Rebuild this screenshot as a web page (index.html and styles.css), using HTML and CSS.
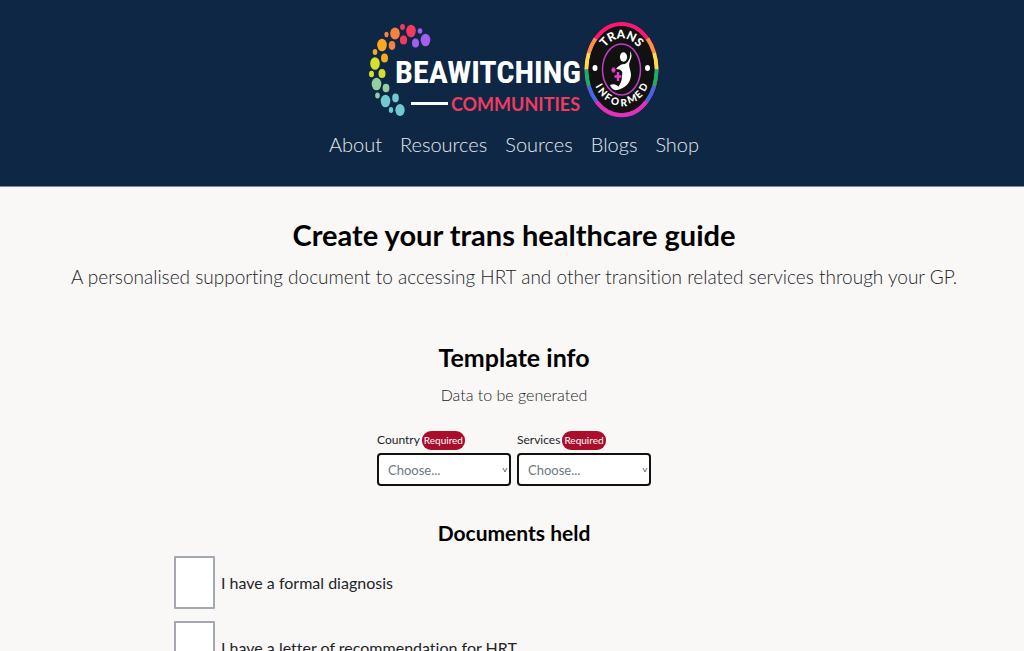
FILE: index.html
```html
<!DOCTYPE html>
<html lang="en">
<head>
<meta charset="utf-8">
<meta name="viewport" content="width=device-width, initial-scale=1">
<title>Create your trans healthcare guide</title>
<link rel="stylesheet" href="styles.css">
</head>
<body>
<header class="site-header">
  <a class="brand" href="#" aria-label="Beawitching Communities, trans informed">
    <svg class="logo" viewBox="0 0 290 98" width="290" height="98">
      <g fill="#6fcbd0"><ellipse cx="16.500" cy="81" rx="4.800" ry="6.300"/><ellipse cx="26.500" cy="78" rx="3.300" ry="4.400"/><ellipse cx="22" cy="90" rx="2.200" ry="3"/><ellipse cx="31" cy="90" rx="4.700" ry="6"/></g>
      <g fill="#96cf9c"><ellipse cx="7.500" cy="64" rx="4.800" ry="6.300"/><ellipse cx="17" cy="68" rx="3.400" ry="4.300"/><ellipse cx="8.500" cy="75.500" rx="2.300" ry="3"/></g>
      <g fill="#d7df2c"><ellipse cx="6" cy="43.500" rx="4.800" ry="6.300"/><ellipse cx="13" cy="53.500" rx="3.500" ry="4.600"/><ellipse cx="2.500" cy="54" rx="2.500" ry="3.200"/></g>
      <g fill="#f9a824"><ellipse cx="13" cy="25" rx="4.800" ry="6.300"/><ellipse cx="15.500" cy="38" rx="3.500" ry="4.500"/><ellipse cx="6" cy="32" rx="2.300" ry="3"/></g>
      <g fill="#f5823f"><ellipse cx="26" cy="13.500" rx="4.800" ry="6"/><ellipse cx="23" cy="25.500" rx="3.300" ry="4.400"/><ellipse cx="17.500" cy="14.500" rx="2.100" ry="2.700"/></g>
      <g fill="#f23a60"><ellipse cx="42" cy="11" rx="4.800" ry="6.300"/><ellipse cx="34.500" cy="20" rx="3.600" ry="4.500"/><ellipse cx="33.500" cy="7" rx="2.400" ry="3"/></g>
      <g fill="#a55fee"><ellipse cx="56.500" cy="20" rx="4.800" ry="6.300"/><ellipse cx="46.500" cy="23" rx="3.500" ry="4.500"/><ellipse cx="51" cy="11" rx="2.300" ry="2.800"/></g>
      <text class="logo-name" x="26" y="63">BEAWITCHING</text>
      <rect x="42" y="82" width="37" height="3" fill="#fff"/>
      <text class="logo-sub" x="211" y="91" text-anchor="end">COMMUNITIES</text>
      <g fill="none" stroke-width="4">
        <ellipse cx="252.500" cy="49.500" rx="35" ry="45.500" stroke="#ff1671"/>
        <path d="M226.500 18.500A35 45.500 0 0 0 220 33M278.500 18.500A35 45.500 0 0 1 285 33" stroke="#ff913d"/>
        <path d="M220 33A35 45.500 0 0 0 217.500 49.500M285 33A35 45.500 0 0 1 287.500 49.500" stroke="#f8df45"/>
        <path d="M217.500 49.500A35 45.500 0 0 0 220 66M287.500 49.500A35 45.500 0 0 1 285 66" stroke="#13b367"/>
        <path d="M220 66A35 45.500 0 0 0 227.500 81.500M285 66A35 45.500 0 0 1 277.500 81.500" stroke="#3c6bea"/>
        <path d="M227.500 81.500A35 45.500 0 0 0 277.500 81.500" stroke="#dc32bd"/>
      </g>
      <ellipse cx="252.500" cy="49.500" rx="33" ry="43.500" fill="#111"/>
      <ellipse cx="252.500" cy="49.500" rx="19" ry="25.500" fill="none" stroke="#c43cc8" stroke-width="1.500"/>
      <ellipse cx="226" cy="48" rx="2.500" ry="3" fill="#fff"/>
      <ellipse cx="278.500" cy="48" rx="2.500" ry="3" fill="#fff"/>
      <path id="arc-top" fill="none" d="M229 49.500A23.500 31 0 0 1 276 49.500"/>
      <text class="seal-text seal-top"><textPath href="#arc-top" startOffset="50%" text-anchor="middle">TRANS</textPath></text>
      <text class="seal-text" x="226.200 228.600 234.800 241.300 251.700 259.700 269.800 275.400" y="66.200 71.500 78.800 83.700 86.400 83.800 78.900 72.300" rotate="60 48 32 14 -4 -20 -42 -60">INFORMED</text>
      <g fill="#fff">
        <ellipse cx="254.500" cy="37" rx="3.600" ry="4.700"/>
        <path d="M261 31C262 37 260 42 256 44C252 44 249 46 247 49C253 49 254 52 253 56C253 62 250 66 247 70C256 69 262 63 262 54C261 47 259 46 261 41C263 37 263 34 261 31Z"/>
        <path d="M241 65C245 63 248 65 251 68C247 72 243 70 241 65Z"/>
      </g>
      <path d="M249 52v9M245.500 56.500h7M244.500 47.500v5M242.500 50h4" stroke="#e83fd0" stroke-width="2.400" fill="none"/>
    </svg>
  </a>
  <nav class="nav" aria-label="Main">
    <a href="#">About</a>
    <a href="#">Resources</a>
    <a href="#">Sources</a>
    <a href="#">Blogs</a>
    <a href="#">Shop</a>
  </nav>
</header>
<main class="page">
  <h1 class="title">Create your trans healthcare guide</h1>
  <p class="lead">A personalised supporting document to accessing HRT and other transition related services through your GP.</p>
  <form class="guide-form">
    <h2 class="section-title">Template info</h2>
    <p class="section-note">Data to be generated</p>
    <div class="fields">
      <div class="field">
        <label class="field-label" for="country">Country <span class="badge">Required</span></label>
        <div class="select-wrap">
          <select class="select" id="country" required><option value="">Choose...</option></select>
          <svg class="chevron" viewBox="0 0 6 6" width="6" height="6"><path d="M1 1L3 5L5 1" fill="none" stroke="#66717c"/></svg>
        </div>
      </div>
      <div class="field">
        <label class="field-label" for="services">Services <span class="badge">Required</span></label>
        <div class="select-wrap">
          <select class="select" id="services" required><option value="">Choose...</option></select>
          <svg class="chevron" viewBox="0 0 6 6" width="6" height="6"><path d="M1 1L3 5L5 1" fill="none" stroke="#66717c"/></svg>
        </div>
      </div>
    </div>
    <fieldset class="documents">
      <legend class="documents-title">Documents held</legend>
      <label class="check-row"><input class="check" type="checkbox">I have a formal diagnosis</label>
      <label class="check-row"><input class="check" type="checkbox">I have a letter of recommendation for HRT</label>
    </fieldset>
  </form>
</main>
</body>
</html>
```

FILE: styles.css
```css
* { box-sizing: border-box; }

body {
  margin: 0;
  background: #f9f8f7;
  color: #212529;
  font-family: Lato, "Open Sans", sans-serif;
  font-size: 16px;
  font-variant-ligatures: none;
}

.site-header {
  display: flex;
  flex-direction: column;
  align-items: center;
  gap: 8px;
  padding: 20px 16px 24px 20px;
  background: #0d2745;
  border-bottom: 1px solid #7f8b9a;
}

.brand { display: block; }
.logo { display: block; overflow: visible; }

.logo-name {
  font-family: "Liberation Sans Narrow", "Roboto Condensed", "DejaVu Sans Condensed", sans-serif;
  font-size: 32px;
  font-weight: 700;
  fill: #fff;
}

.logo-sub {
  font-size: 18px;
  font-weight: 700;
  fill: #f23a60;
}

.seal-text {
  font-size: 10px;
  font-weight: 900;
  fill: #fff;
}

.seal-top { font-size: 12px; }

.nav {
  display: flex;
  flex-wrap: wrap;
  justify-content: center;
  gap: 18px;
  min-height: 35px;
}

.nav a {
  color: #e6e9ed;
  font-size: 20px;
  font-weight: 300;
  line-height: 36px;
  text-decoration: none;
}

.page {
  padding: 28px 16px 32px 20px;
  text-align: center;
}

.title {
  margin: 0;
  color: #000;
  font-size: 29px;
  font-weight: 700;
  line-height: 40px;
}

.lead {
  margin: 8px 0 0;
  font-size: 19px;
  font-weight: 300;
  line-height: 28px;
}

.section-title {
  margin: 48px 0 0;
  color: #000;
  font-size: 25px;
  font-weight: 700;
  line-height: 36px;
}

.section-note {
  margin: 8px 0 0;
  font-size: 16px;
  font-weight: 300;
  line-height: 24px;
}

.fields {
  display: flex;
  flex-wrap: wrap;
  justify-content: center;
  gap: 6px;
  margin-top: 21px;
}

.field { width: 134px; text-align: left; }

.field-label {
  display: flex;
  align-items: center;
  gap: 2px;
  margin-bottom: 1px;
  font-size: 12px;
  line-height: 24px;
}

.badge {
  padding: 0 2px;
  border-radius: 9px;
  background: #a90e2b;
  color: #fff;
  font-size: 10px;
  line-height: 19px;
}

.select-wrap { position: relative; }

.select {
  display: block;
  appearance: none;
  width: 100%;
  height: 33px;
  padding: 0 16px 0 9px;
  border: 2px solid #111;
  border-radius: 4px;
  background: #fff;
  color: #6c7883;
  font-family: inherit;
  font-size: 13px;
}

.chevron {
  position: absolute;
  right: 3px;
  top: 14px;
  pointer-events: none;
}

.documents {
  max-width: 680px;
  margin: 31px auto 0;
  padding: 0;
  border: 0;
}

.documents-title {
  padding: 0;
  margin: 0 auto;
  color: #000;
  font-size: 21px;
  font-weight: 700;
  line-height: 31px;
}

.check-row {
  display: flex;
  align-items: center;
  gap: 6px;
  margin: 8px 0 12px;
  font-size: 16px;
  line-height: 24px;
  text-align: left;
}

.check {
  appearance: none;
  flex: none;
  width: 41px;
  height: 53px;
  margin: 0;
  border: 2px solid #a5a8b2;
  border-radius: 1px;
  background: #fff;
}
```
